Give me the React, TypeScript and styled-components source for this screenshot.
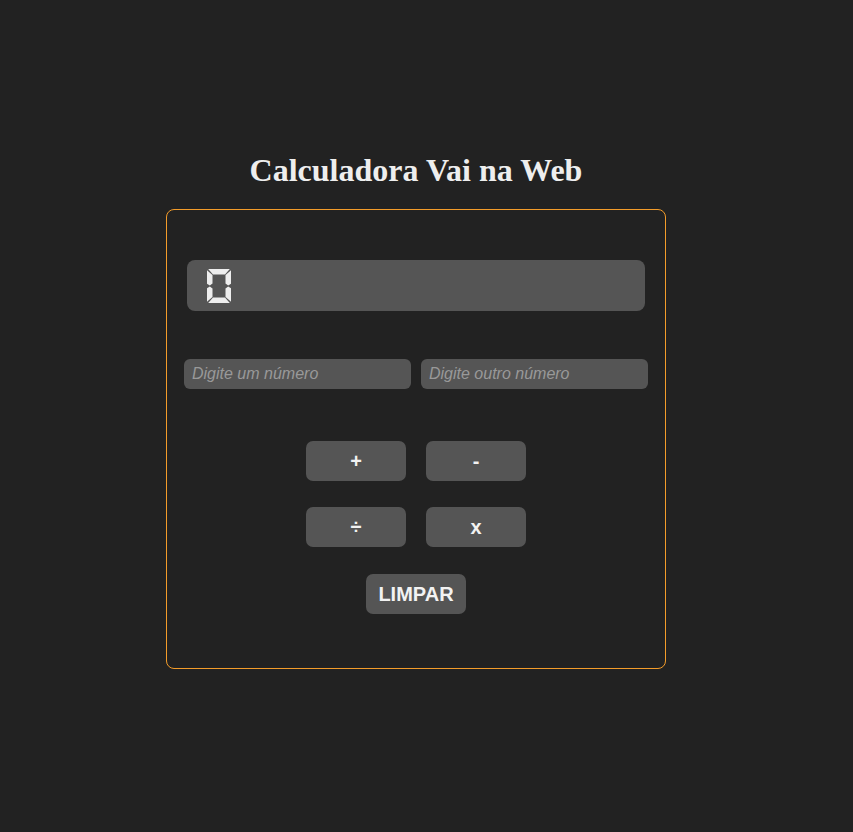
import React from "react";
import styled, { createGlobalStyle } from "styled-components";

const Global = createGlobalStyle`
  html, body { margin: 0; padding: 0; background: #222222; }
  body { font-family: "Liberation Sans", Arial, sans-serif; }
`;

const Page = styled.main`
  display: flex;
  flex-direction: column;
  align-items: center;
  padding: 152px 22px 0 1px;
  min-height: 832px;
  box-sizing: border-box;
`;

const Title = styled.h1`
  margin: 0 0 20px;
  font-family: "Liberation Serif", "Times New Roman", serif;
  font-weight: 700;
  font-size: 32px;
  line-height: 37px;
  color: #eeeeee;
`;

const Card = styled.section`
  width: 500px;
  height: 460px;
  box-sizing: border-box;
  border: 1px solid #f39c2a;
  border-radius: 8px;
  display: flex;
  flex-direction: column;
  align-items: center;
  padding-top: 50px;
`;

const Display = styled.div`
  width: 458px;
  height: 51px;
  background: #555555;
  border-radius: 8px;
  display: flex;
  align-items: center;
  padding-left: 20px;
  box-sizing: border-box;
`;

const Inputs = styled.div`
  display: flex;
  gap: 10px;
  margin-top: 48px;
`;

const NumberInput = styled.input`
  width: 227px;
  height: 30px;
  box-sizing: border-box;
  border: none;
  outline: none;
  border-radius: 6px;
  background: #555555;
  color: #eeeeee;
  padding: 0 8px;
  font-family: "Liberation Sans", Arial, sans-serif;
  font-size: 16px;
  font-style: italic;
  &::placeholder { color: #999999; }
`;

const Buttons = styled.div`
  display: grid;
  grid-template-columns: 100px 100px;
  column-gap: 20px;
  row-gap: 26px;
  margin-top: 52px;
  justify-items: center;
`;

const OpButton = styled.button<{ $wide?: boolean }>`
  width: 100px;
  height: 40px;
  border: none;
  border-radius: 7px;
  background: #555555;
  color: #f2f2f2;
  font-family: "Liberation Sans", Arial, sans-serif;
  font-weight: 700;
  font-size: 20px;
  cursor: pointer;
  padding: 0;
  ${(p) => (p.$wide ? "grid-column: 1 / span 2; margin-top: 1px;" : "")}
`;

const SegDigit: React.FC = () => (
  <svg width="24" height="34" viewBox="0 0 24 34" role="img" aria-label="0">
    <g fill="#eeeeee">
      <polygon points="1.2,0 22.8,0 18,5.5 6,5.5" />
      <polygon points="0,1.2 5.5,6 5.5,14.5 2.8,16.6 0,14.8" />
      <polygon points="24,1.2 18.5,6 18.5,14.5 21.2,16.6 24,14.8" />
      <polygon points="0,19.2 2.8,17.4 5.5,19.5 5.5,28 0,32.8" />
      <polygon points="24,19.2 21.2,17.4 18.5,19.5 18.5,28 24,32.8" />
      <polygon points="1.2,34 6,28.5 18,28.5 22.8,34" />
    </g>
  </svg>
);

export default function App() {
  return (
    <>
      <Global />
      <Page>
        <Title>Calculadora Vai na Web</Title>
        <Card>
          <Display>
            <SegDigit />
          </Display>
          <Inputs>
            <NumberInput type="number" placeholder="Digite um número" />
            <NumberInput type="number" placeholder="Digite outro número" />
          </Inputs>
          <Buttons>
            <OpButton>+</OpButton>
            <OpButton>-</OpButton>
            <OpButton>÷</OpButton>
            <OpButton>x</OpButton>
            <OpButton $wide>LIMPAR</OpButton>
          </Buttons>
        </Card>
      </Page>
    </>
  );
}
